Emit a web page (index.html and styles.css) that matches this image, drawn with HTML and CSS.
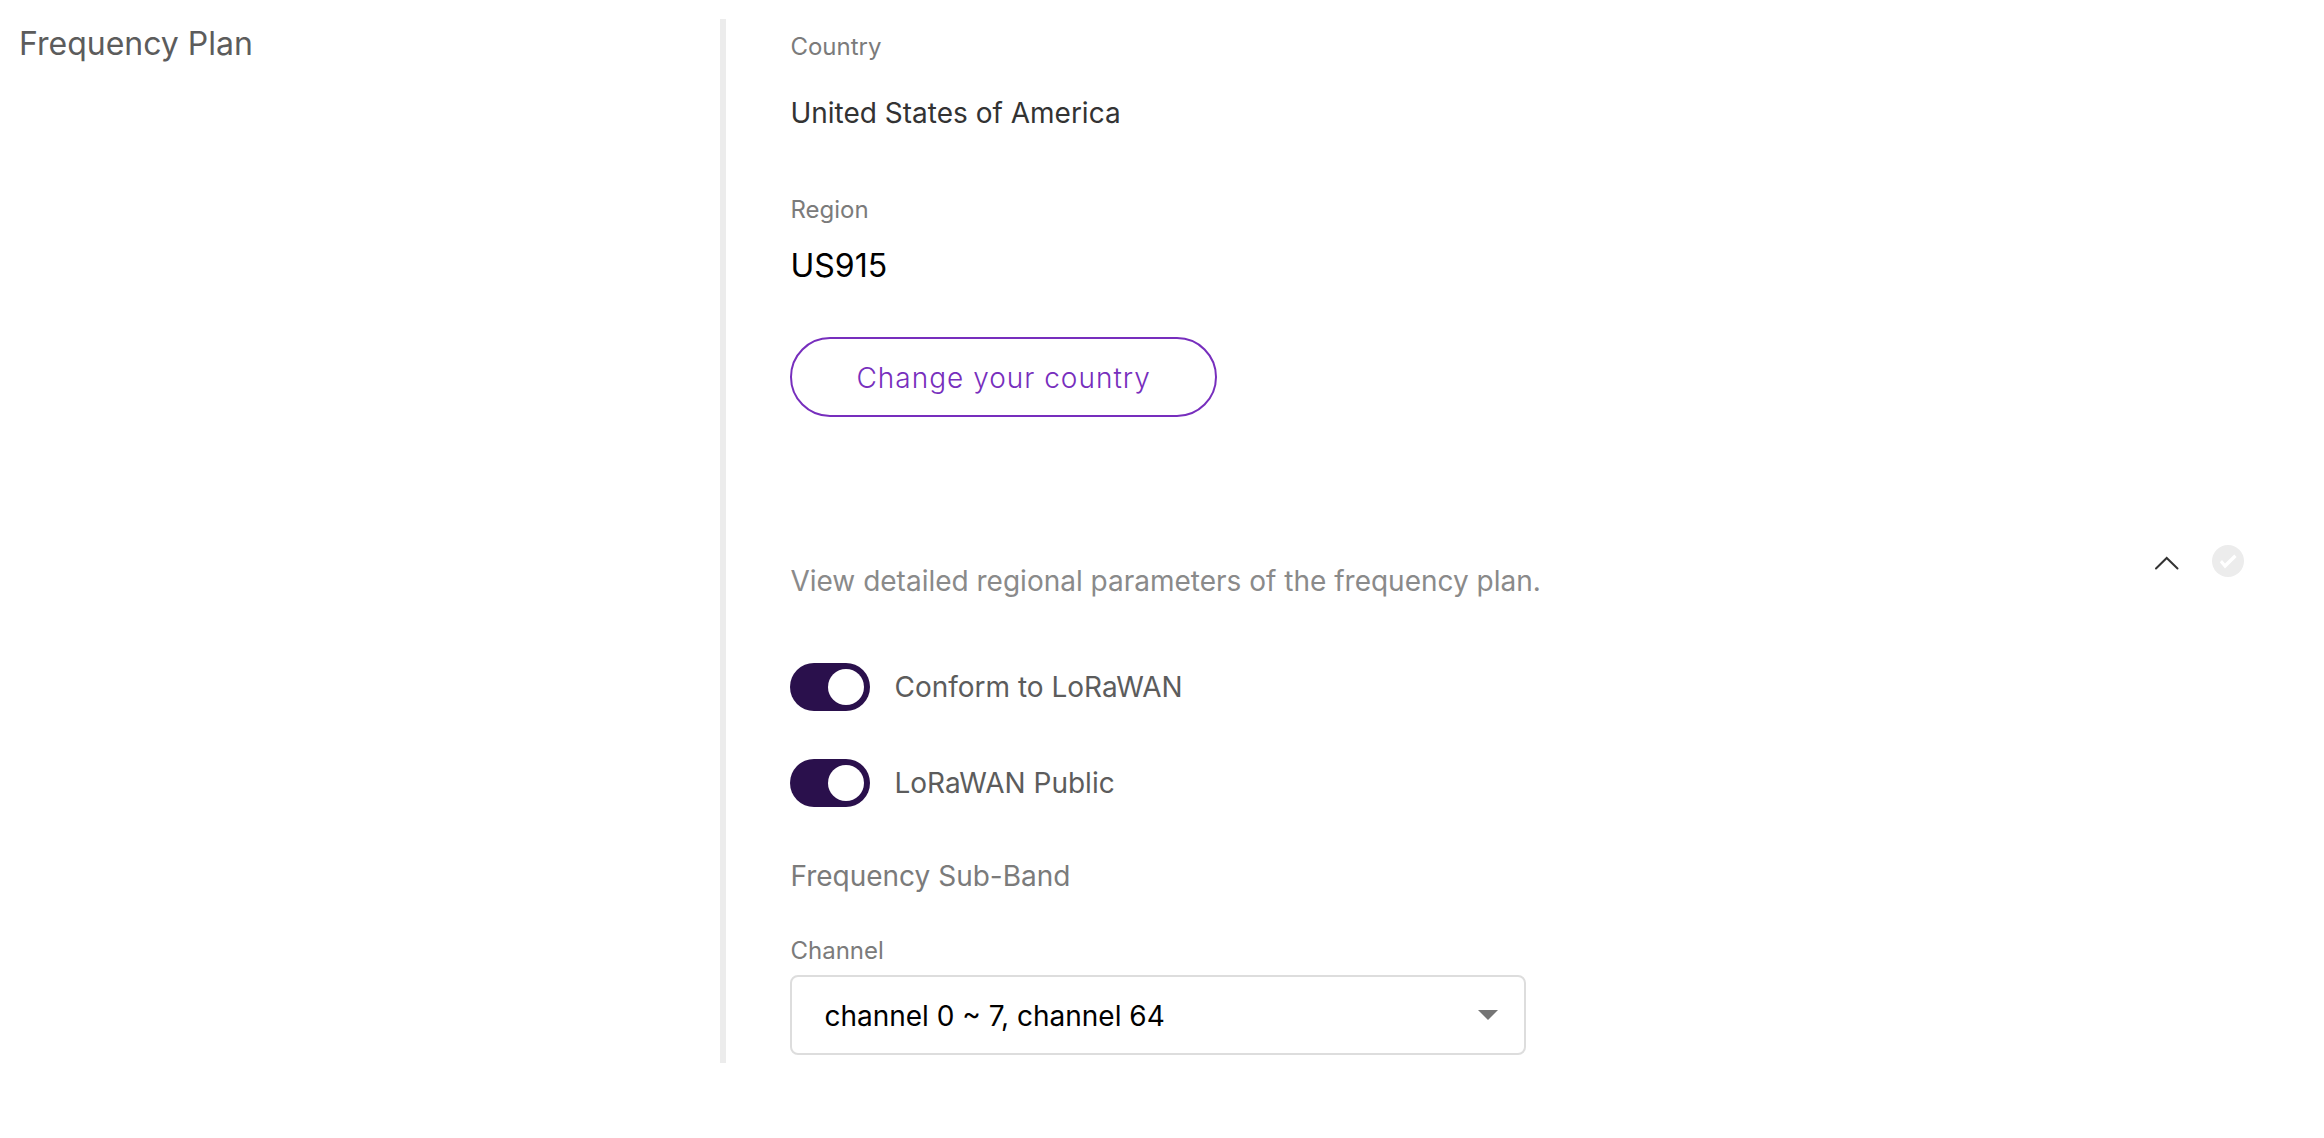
FILE: index.html
```html
<!DOCTYPE html>
<html lang="en">
<head>
<meta charset="utf-8">
<meta name="viewport" content="width=device-width, initial-scale=1">
<title>Frequency Plan</title>
<link rel="stylesheet" href="styles.css">
</head>
<body>
<main class="settings">
  <h1 class="settings-title">Frequency Plan</h1>
  <section class="settings-content">
    <dl class="facts">
      <dt class="small-label">Country</dt>
      <dd class="country">United States of America</dd>
      <dt class="small-label">Region</dt>
      <dd class="region">US915</dd>
    </dl>
    <button type="button" class="outline-button">Change your country</button>

    <div class="details-header">
      <p class="details-text">View detailed regional parameters of the frequency plan.</p>
      <div class="details-actions">
        <button type="button" class="icon-button" aria-label="Collapse details" aria-expanded="true">
          <svg width="32" height="32" viewBox="0 0 32 32" fill="none" stroke="#333" stroke-width="2" stroke-linecap="round"><path d="M6 23.500 16.700 13 27.500 23.500"/></svg>
        </button>
        <svg width="32" height="32" viewBox="0 0 32 32" aria-hidden="true"><circle cx="16" cy="16" r="16" fill="#ececec"/><path d="M7.800 17.300 10 15 13 18.500 22.300 9.500 24.600 11.900 13 23.400z" fill="#fff"/></svg>
      </div>
    </div>

    <div class="switches">
      <label class="switch-row"><input class="switch" type="checkbox" role="switch" checked>Conform to LoRaWAN</label>
      <label class="switch-row"><input class="switch" type="checkbox" role="switch" checked>LoRaWAN Public</label>
    </div>

    <h2 class="band-title">Frequency Sub-Band</h2>
    <div class="field">
      <label class="small-label" for="channel">Channel</label>
      <div class="select-box">
        <select id="channel" class="select">
          <option>channel 0 ~ 7, channel 64</option>
        </select>
        <svg class="select-arrow" width="20" height="10" viewBox="0 0 20 10" aria-hidden="true"><path d="M0 0h20L10 10z" fill="#757575"/></svg>
      </div>
    </div>
  </section>
</main>
</body>
</html>
```
FILE: styles.css
```css
* {
  box-sizing: border-box;
}

body {
  margin: 0;
  background: #fff;
  color: #000;
  font: 400 28px/40px Inter, "Liberation Sans", sans-serif;
}

h1, h2, p, dl, dd {
  margin: 0;
  font-weight: 400;
}

.settings {
  display: grid;
  grid-template-columns: 31% 1fr;
  padding: 19px 0;
}

.settings-title {
  padding: 5px 19px;
  font-size: 32px;
  color: #5c5c5c;
}

.settings-content {
  padding: 12px 80px 8px 64px;
  border-left: 6px solid #ececec;
}

.small-label {
  font-size: 24px;
  line-height: 32px;
  color: #7b7b7b;
}

.country {
  margin: 30px 0 61px;
  color: #333;
}

.region {
  margin: 20px 0 51px;
  font-size: 32px;
}

.outline-button {
  display: block;
  height: 80px;
  padding: 2px 64px 0;
  border: 2px solid #772ebd;
  border-radius: 40px;
  background: none;
  color: #772ebd;
  font: inherit;
  font-weight: 300;
  letter-spacing: 1px;
}

.details-header {
  display: flex;
  justify-content: space-between;
  align-items: flex-start;
  margin: 128px 0 62px;
}

.details-text {
  padding-top: 16px;
  color: #8a8a8a;
}

.details-actions {
  display: flex;
  gap: 30px;
}

.icon-button {
  display: flex;
  padding: 0;
  border: 0;
  background: none;
}

.switches {
  display: grid;
  justify-items: start;
  gap: 48px;
}

.switch-row {
  display: flex;
  align-items: center;
  gap: 24px;
  color: #5c5c5c;
}

.switch {
  display: flex;
  justify-content: flex-end;
  appearance: none;
  width: 80px;
  height: 48px;
  margin: 0;
  padding: 6px;
  border-radius: 24px;
  background: #2a104c;
}

.switch:not(:checked) {
  justify-content: flex-start;
  background: #bbb;
}

.switch::before {
  content: "";
  width: 36px;
  height: 36px;
  border-radius: 50%;
  background: #fff;
}

.band-title {
  margin: 49px 0 39px;
  font-size: 28px;
  color: #7b7b7b;
}

.field {
  display: grid;
  gap: 8px;
  max-width: 736px;
}

.select-box {
  display: grid;
  align-items: center;
}

.select-box > * {
  grid-area: 1 / 1;
}

.select {
  appearance: none;
  width: 100%;
  height: 80px;
  padding: 2px 64px 0 32px;
  border: 2px solid #ddd;
  border-radius: 8px;
  background: #fff;
  color: #000;
  font: inherit;
}

.select-arrow {
  justify-self: end;
  margin-right: 28px;
  pointer-events: none;
}
```
